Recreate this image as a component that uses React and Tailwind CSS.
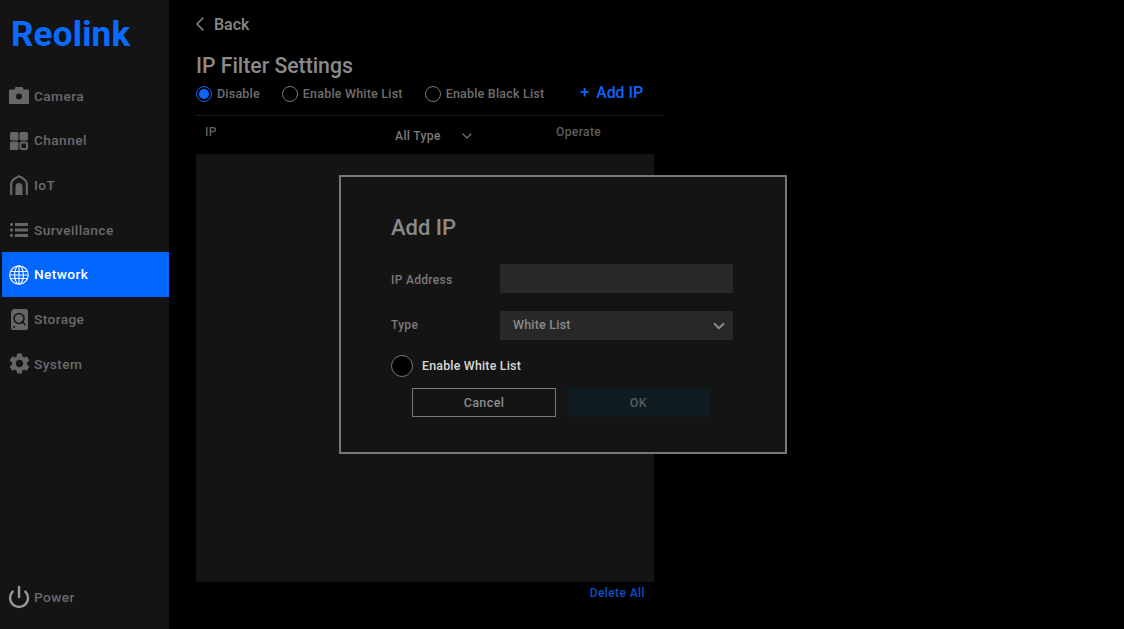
import { ChevronLeft, ChevronDown, Power } from "lucide-react";
import { MdSettings } from "react-icons/md";

const font = { fontFamily: "Roboto, sans-serif" };

function CameraIcon() {
  return (
    <svg width="20" height="17" viewBox="0 0 20 17">
      <path d="M1 2.5h4.5L6.5 0h7l1 2.5H19a1 1 0 0 1 1 1V16a1 1 0 0 1-1 1H1a1 1 0 0 1-1-1V3.5a1 1 0 0 1 1-1z" fill="#666" />
      <circle cx="10" cy="9.5" r="3" fill="#141414" />
    </svg>
  );
}

function ChannelIcon() {
  return (
    <svg width="18" height="18" viewBox="0 0 18 18">
      <rect x="0" y="0" width="8.5" height="8.5" rx="1.5" fill="#666" />
      <rect x="9.5" y="0" width="8.5" height="8.5" rx="1.5" fill="#666" />
      <rect x="0" y="9.5" width="8.5" height="8.5" rx="1.5" fill="#666" />
      <rect x="10.5" y="10.5" width="6.5" height="6.5" rx="1" fill="none" stroke="#666" strokeWidth="2" />
    </svg>
  );
}

function IotIcon() {
  return (
    <svg width="18" height="20" viewBox="0 0 18 20">
      <path d="M1.2 20V8.5C1.2 6 5 3 9 1.2 13 3 16.8 6 16.8 8.5V20" fill="none" stroke="#666" strokeWidth="2.2" />
      <path d="M5.5 20v-8.5a3.5 3.5 0 0 1 7 0V20z" fill="#666" />
    </svg>
  );
}

function SurveillanceIcon() {
  return (
    <svg width="18" height="14" viewBox="0 0 18 14">
      <rect x="0" y="0" width="3" height="3" rx="1.2" fill="#666" />
      <rect x="0" y="5.5" width="3" height="3" rx="1.2" fill="#666" />
      <rect x="0" y="11" width="3" height="3" rx="1.2" fill="#666" />
      <rect x="5" y="0" width="13" height="3" fill="#666" />
      <rect x="5" y="5.5" width="13" height="3" fill="#666" />
      <rect x="5" y="11" width="13" height="3" fill="#666" />
    </svg>
  );
}

function GlobeIcon() {
  return (
    <svg width="20" height="20" viewBox="0 0 20 20" fill="none" stroke="#e8f0ff" strokeWidth="1.2">
      <circle cx="10" cy="10" r="9.2" />
      <ellipse cx="10" cy="10" rx="4.4" ry="9.2" />
      <path d="M10 .8v18.4M1.6 6.5h16.8M.8 10h18.4M1.6 13.5h16.8" />
    </svg>
  );
}

function StorageIcon() {
  return (
    <svg width="18" height="21" viewBox="0 0 18 21">
      <path d="M3 0h13a2 2 0 0 1 2 2v17a2 2 0 0 1-2 2H3a2 2 0 0 1-2-2V3z" fill="#666" />
      <circle cx="9" cy="9.5" r="5" fill="none" stroke="#141414" strokeWidth="1.6" />
      <path d="M11.5 12l4 4" stroke="#141414" strokeWidth="1.6" />
      <circle cx="4" cy="18" r="1" fill="#141414" />
    </svg>
  );
}

const navItems = [
  { label: "Camera", icon: <CameraIcon /> },
  { label: "Channel", icon: <ChannelIcon /> },
  { label: "IoT", icon: <IotIcon /> },
  { label: "Surveillance", icon: <SurveillanceIcon /> },
  { label: "Network", icon: <GlobeIcon />, active: true },
  { label: "Storage", icon: <StorageIcon /> },
  { label: "System", icon: <MdSettings size={25} color="#666" /> },
];

function Radio({ checked, label }) {
  return (
    <div className="flex items-center gap-[5px] whitespace-nowrap">
      <span className={checked ? "flex h-4 w-4 items-center justify-center rounded-full border border-[#0a66ff]" : "flex h-4 w-4 items-center justify-center rounded-full border border-[#777]"}>
        {checked && <span className="h-[10px] w-[10px] rounded-full bg-[#0a66ff]" />}
      </span>
      <span className="text-[12.5px] font-medium tracking-[0.2px] text-[#6f6f6f]">{label}</span>
    </div>
  );
}

export default function App() {
  return (
    <div className="relative flex h-[629px] w-[1124px] overflow-hidden bg-black" style={font}>
      {/* Menu */}
      <aside className="flex w-[169px] shrink-0 flex-col bg-[#141414] pb-[20px]">
        <div className="h-[73.5px] pl-[11px] pt-[14px] text-[35px] font-bold leading-[42px] tracking-[0.2px] text-[#0a6cff]">Reolink</div>
        <nav className="flex flex-col">
          {navItems.map((item) => (
            <div
              key={item.label}
              className={
                item.active
                  ? "ml-[2px] flex h-[44.7px] items-center bg-[#0066ff] text-white"
                  : "ml-[2px] flex h-[44.7px] items-center text-[#6a6a6a]"
              }
            >
              <span className="flex w-[32px] shrink-0 items-center justify-center pl-[2px]">{item.icon}</span>
              <span className="text-[13.7px] font-medium tracking-[0.4px]">{item.label}</span>
            </div>
          ))}
        </nav>
        <div className="mt-auto ml-[2px] flex items-center text-[#6a6a6a]">
          <span className="flex w-[32px] shrink-0 justify-center pl-[2px]">
            <Power size={24} color="#9a9a9a" strokeWidth={2.4} />
          </span>
          <span className="text-[13.7px] font-medium tracking-[0.4px]">Power</span>
        </div>
      </aside>

      {/* Page */}
      <main className="flex w-[495px] flex-col pl-[27px]">
        <div className="flex h-[48px] items-center pt-[1px] text-[#8a8a8a]">
          <ChevronLeft size={24} strokeWidth={1.5} className="-ml-[8px] -mt-[2px]" />
          <span className="ml-[2px] text-[16px] font-medium">Back</span>
        </div>
        <h1 className="h-[26px] text-[21.2px] font-medium leading-[36px] text-[#8a8a8a]">IP Filter Settings</h1>
        <div className="flex h-[41px] items-center pb-[1px]">
          <Radio checked label="Disable" />
          <div className="ml-[22px]"><Radio label="Enable White List" /></div>
          <div className="ml-[22px]"><Radio label="Enable Black List" /></div>
          <div className="ml-[36px] -mt-[3px] flex items-center whitespace-nowrap text-[#0a66ff]">
            <span className="text-[16px] font-medium">+</span>
            <span className="ml-[7px] text-[15.8px] font-medium">Add IP</span>
          </div>
        </div>
        <div className="flex h-[39px] border-t border-[#1c1c1c] text-[12px] font-medium tracking-[0.4px] text-[#5f5f5f]">
          <span className="w-[199px] pl-[9px] pt-[7px]">IP</span>
          <span className="flex w-[161px] items-start pt-[11px] text-[12.2px] tracking-[0.3px] text-[#7a7a7a]">
            All Type
            <ChevronDown size={16} strokeWidth={1.6} className="ml-[18px] mt-[1px]" />
          </span>
          <span className="pt-[7px]">Operate</span>
        </div>
        <div className="h-[428px] w-[458px] bg-[#141414]" />
        <div className="w-[449px] pt-[2px] text-right text-[12px] font-medium tracking-[0.4px] text-[#0a50c0]">Delete All</div>
      </main>

      {/* Add IP dialog */}
      <div className="absolute left-[339px] top-[175px] h-[279px] w-[448px] border-2 border-[#777] bg-[#141414] px-[50px] pt-[35px]">
        <h2 className="h-[32px] text-[22px] font-medium leading-[32px] text-[#8a8a8a]">Add IP</h2>
        <div className="mt-[20px] flex h-[29px] items-center">
          <label className="w-[109px] pt-[2px] text-[12px] font-medium tracking-[0.3px] text-[#7a7a7a]">IP Address</label>
          <div className="h-[29px] w-[233px] bg-[#282828]" />
        </div>
        <div className="mt-[18px] flex h-[29px] items-center">
          <label className="w-[109px] pb-[1px] text-[12px] font-medium tracking-[0.3px] text-[#7a7a7a]">Type</label>
          <div className="flex h-[29px] w-[233px] items-center justify-between bg-[#282828] pl-[13px] pr-[5px] text-[12.5px] font-medium tracking-[0.2px] text-[#8a8a8a]">
            White List
            <ChevronDown size={18} strokeWidth={2.6} />
          </div>
        </div>
        <div className="mt-[15px] flex items-center">
          <span className="h-[22px] w-[22px] rounded-full border border-[#777] bg-black" />
          <span className="ml-[9px] text-[12.4px] font-medium tracking-[0.2px] text-[#d8d8d8]">Enable White List</span>
        </div>
        <div className="ml-[21px] mt-[11px] flex gap-[11px] pt-0 text-[12.5px] font-medium tracking-[0.4px]">
          <button className="h-[29px] w-[144px] border border-[#777] pt-[1px] text-[#8a8a8a]">Cancel</button>
          <button className="h-[29px] w-[143px] bg-[#0e1c22] pt-[1px] text-[#5a5a5a]">OK</button>
        </div>
      </div>
    </div>
  );
}
